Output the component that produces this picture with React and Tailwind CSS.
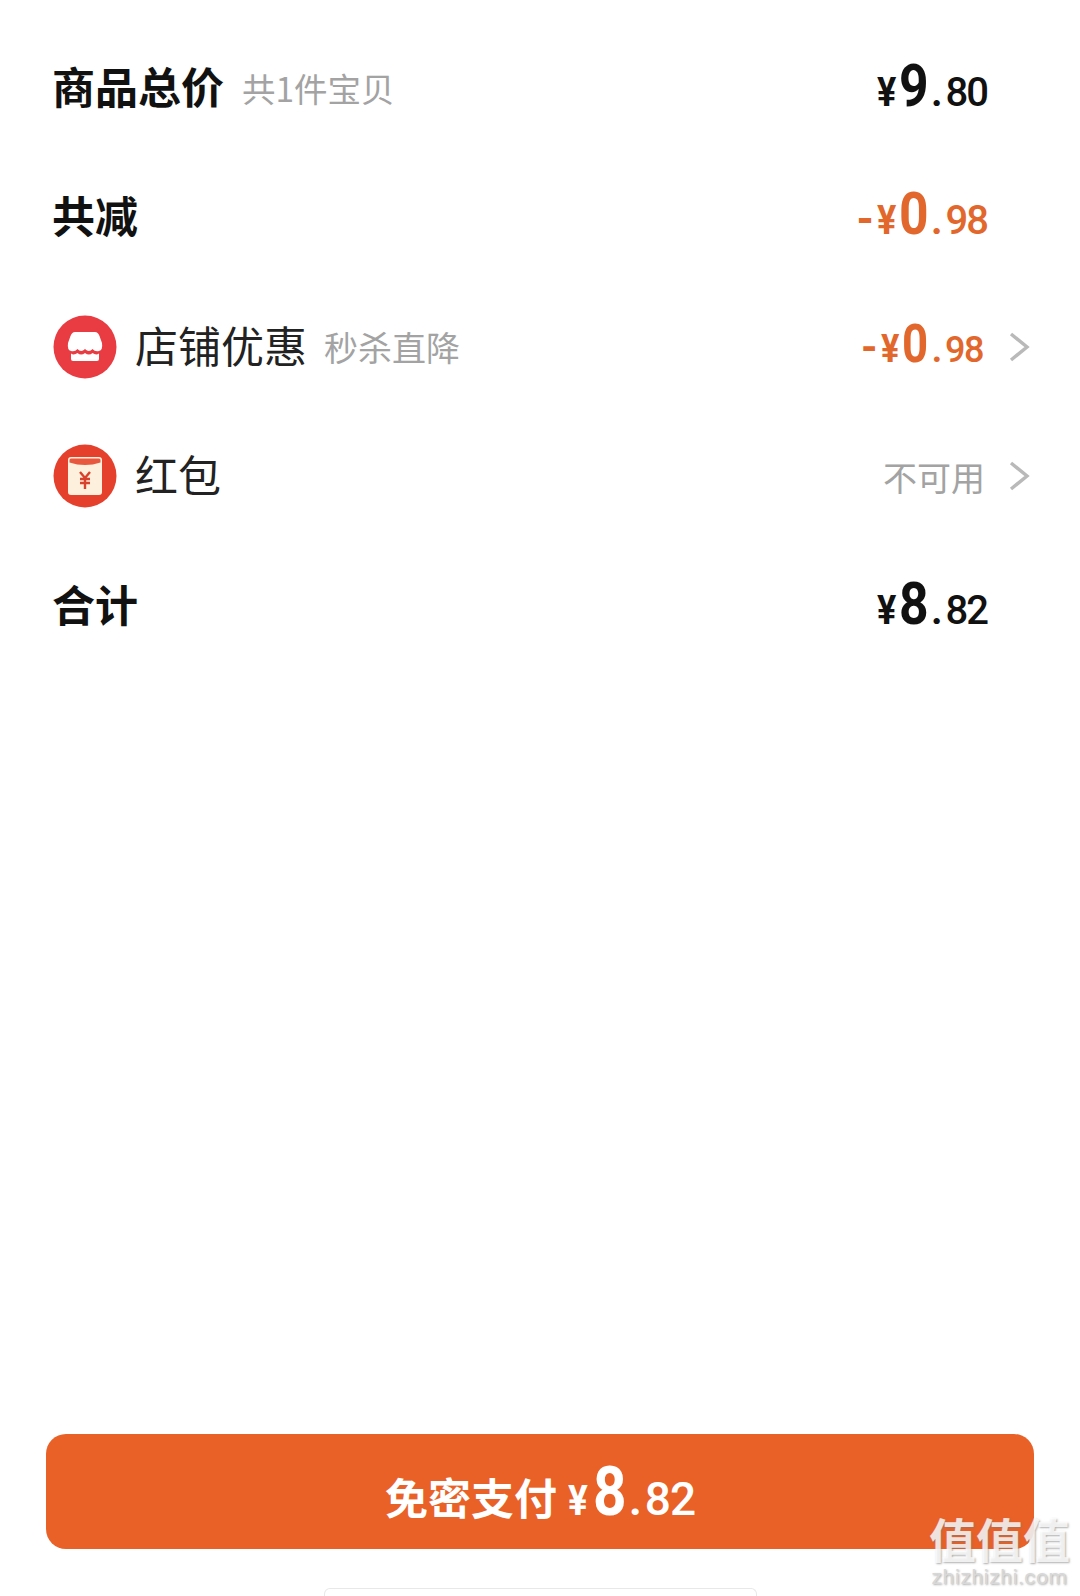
const cjk = { fontFamily: '"Noto Sans CJK SC", sans-serif' };
const num = { fontFamily: 'Roboto, "Liberation Sans", sans-serif' };

const SIZES = {
  md: {
    yen: 'text-[41px] w-[19px] mr-[3px]',
    whole: 'text-[60px] w-[28px] scale-x-[0.86]',
    dot: 'text-[40px] ml-[4px]',
    cents: 'text-[40px] ml-[3px] tracking-[-2px]',
    minus: 'text-[44px] mr-[3px]',
  },
  sm: {
    yen: 'text-[39px] w-[18px] mr-[3px]',
    whole: 'text-[53px] w-[26px] scale-x-[0.86]',
    dot: 'text-[36px] ml-[4px]',
    cents: 'text-[36px] ml-[3px] tracking-[-1.5px]',
    minus: 'text-[42px] mr-[3px]',
  },
  lg: {
    yen: 'text-[42px] w-[22px] mr-[3px]',
    whole: 'text-[68px] w-[32px] scale-x-[0.86]',
    dot: 'text-[44px] ml-[4px]',
    cents: 'text-[46px] ml-[3px] tracking-[-1px]',
    minus: '',
  },
};

function Price({ prefix, whole, cents, size = 'md', color = 'text-[#111111]' }) {
  const s = SIZES[size];
  return (
    <span className={`flex items-baseline font-bold ${color}`} style={num}>
      {prefix && <span className={`leading-none ${s.minus}`}>{prefix}</span>}
      <span className={`inline-block origin-left scale-x-[0.88] leading-none ${s.yen}`}>¥</span>
      <span className={`inline-block origin-left leading-none ${s.whole}`}>{whole}</span>
      <span className={`leading-none ${s.dot}`}>.</span>
      <span className={`leading-none font-medium ${s.cents}`}>{cents}</span>
    </span>
  );
}

function Chevron() {
  return (
    <svg width="22" height="32" viewBox="0 0 22 32" className="ml-[21px]" fill="none" stroke="#b9b9b9" strokeWidth="3.4">
      <path d="M3 3 L19 16 L3 29" />
    </svg>
  );
}

function StoreIcon() {
  return (
    <svg width="64" height="64" viewBox="0 0 64 64" className="shrink-0">
      <circle cx="32" cy="32" r="31.5" fill="#e83b42" />
      <path d="M22 17 H42 Q45 17 46.5 21 L49 28 Q50 35 46 36 Q42 37 39.5 34 Q36 38 32 34 Q28 38 24.5 34 Q22 37 18 36 Q14 35 15 28 L17.5 21 Q19 17 22 17 Z" fill="#fff" />
      <path d="M18 38.5 Q21 40.5 24.5 38 Q28 41 32 38 Q36 41 39.5 38 Q43 40.5 46 38.5 V44 Q46 46 44 46 H20 Q18 46 18 44 Z" fill="#fff" />
    </svg>
  );
}

function PacketIcon() {
  return (
    <svg width="64" height="64" viewBox="0 0 64 64" className="shrink-0">
      <circle cx="32" cy="32" r="31.5" fill="#e5402c" />
      <rect x="15" y="13" width="34" height="38" rx="3" fill="#fdf0dc" />
      <path d="M16.5 16 Q16.5 14.5 18 14.5 H46 Q47.5 14.5 47.5 16 V18.5 Q32 23.5 16.5 18.5 Z" fill="#e8583f" />
      <path d="M27 28 L32 34 L37 28 M27 35 H37 M27 39 H37 M32 34 V45" stroke="#d8412c" strokeWidth="2.4" fill="none" />
    </svg>
  );
}

function Row({ children }) {
  return <div className="h-[129.5px] flex items-center justify-between">{children}</div>;
}

export default function App() {
  return (
    <div className="relative w-[1080px] h-[1596px] overflow-hidden bg-white flex flex-col" style={cjk}>
      <div className="pt-[23px] pl-[53px] pr-[50px]">
        <Row>
          <div className="flex items-center">
            <span className="-ml-[1px] pb-[5px] text-[43px] font-bold text-[#111111]">商品总价</span>
            <span className="ml-[18px] text-[33.5px] text-[#a3a3a3]">共1件宝贝</span>
          </div>
          <span className="mr-[43px] pb-[4px]"><Price whole="9" cents="80" /></span>
        </Row>
        <Row>
          <span className="-ml-[1px] pb-[6px] text-[43px] font-bold text-[#111111]">共减</span>
          <span className="mr-[43px] pb-[6px]"><Price prefix="-" whole="0" cents="98" color="text-[#e2672c]" /></span>
        </Row>
        <Row>
          <div className="flex items-center">
            <StoreIcon />
            <span className="ml-[18px] pb-[6px] text-[43px] text-[#222222]">店铺优惠</span>
            <span className="ml-[17px] text-[34px] text-[#a3a3a3]">秒杀直降</span>
          </div>
          <div className="flex items-center">
            <span className="pb-[4px] mr-[4px]"><Price prefix="-" whole="0" cents="98" size="sm" color="text-[#e2672c]" /></span>
            <Chevron />
          </div>
        </Row>
        <Row>
          <div className="flex items-center">
            <PacketIcon />
            <span className="ml-[18px] pb-[6px] text-[43px] text-[#222222]">红包</span>
          </div>
          <div className="flex items-center">
            <span className="mr-[2px] text-[34px] text-[#a3a3a3]">不可用</span>
            <Chevron />
          </div>
        </Row>
        <Row>
          <span className="-ml-[1px] pb-[6px] text-[43px] font-bold text-[#111111]">合计</span>
          <span className="mr-[43px] pb-[3px]"><Price whole="8" cents="82" /></span>
        </Row>
      </div>

      <div className="mt-auto px-[46px]">
        <button className="w-full h-[115px] rounded-[20px] bg-[#e96127] flex items-center justify-center text-white">
          <span className="pt-[9px] text-[43px] font-bold mr-[11px]">免密支付</span>
          <Price whole="8" cents="82" size="lg" color="text-white" />
        </button>
      </div>
      <div className="mt-[39px] mx-auto w-[433px] h-[8px] shrink-0 rounded-t-[6px] border border-b-0 border-[#e8e8e8]" />

      <div className="absolute right-[10px] bottom-[10px] flex flex-col items-center gap-[6px] text-white/80 [text-shadow:1px_1px_2px_rgba(120,120,120,0.6)]">
        <span className="text-[47px] leading-[50px] font-bold">值值值</span>
        <span className="text-[21px] leading-[17px] tracking-[0.6px] text-[#d8d8d8]" style={num}>zhizhizhi.com</span>
      </div>
    </div>
  );
}
